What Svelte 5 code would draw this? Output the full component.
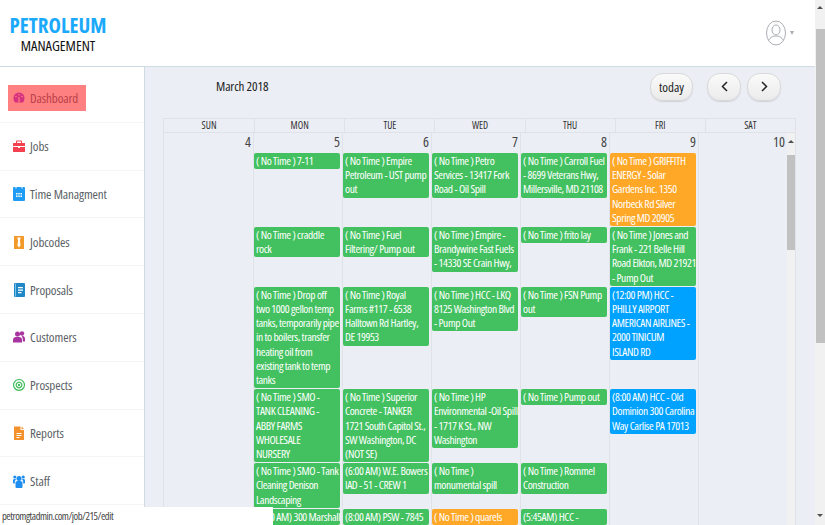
<script lang="ts">
  const nav = [
    { label: "Dashboard", icon: "gauge", color: "#d6317f", active: true },
    { label: "Jobs", icon: "case", color: "#f4404f" },
    { label: "Time Managment", icon: "cal", color: "#1e9cf3" },
    { label: "Jobcodes", icon: "tie", color: "#f39a2c" },
    { label: "Proposals", icon: "book", color: "#1e88c9" },
    { label: "Customers", icon: "users", color: "#a8359f" },
    { label: "Prospects", icon: "target", color: "#43bd5e" },
    { label: "Reports", icon: "doc", color: "#f3912c" },
    { label: "Staff", icon: "team", color: "#1e8ff0" },
  ];

  const days = ["SUN", "MON", "TUE", "WED", "THU", "FRI", "SAT"];
  const dates = [4, 5, 6, 7, 8, 9, 10];

  // one row per stacking level, columns Mon..Fri
  const rows = [
    [
      { t: "( No Time ) 7-11" },
      { t: "( No Time ) Empire\nPetroleum - UST pump\nout" },
      { t: "( No Time ) Petro\nServices - 13417 Fork\nRoad - Oil Spill" },
      { t: "( No Time ) Carroll Fuel\n- 8699 Veterans Hwy,\nMillersville, MD 21108" },
      { t: "( No Time ) GRIFFITH\nENERGY - Solar\nGardens Inc. 1350\nNorbeck Rd Silver\nSpring MD 20905", c: "orange" },
    ],
    [
      { t: "( No Time ) craddle\nrock" },
      { t: "( No Time ) Fuel\nFiltering/ Pump out" },
      { t: "( No Time ) Empire -\nBrandywine Fast Fuels\n- 14330 SE Crain Hwy," },
      { t: "( No Time ) frito lay" },
      { t: "( No Time ) Jones and\nFrank - 221 Belle Hill\nRoad Elkton, MD 21921\n- Pump Out" },
    ],
    [
      { t: "( No Time ) Drop off\ntwo 1000 gellon temp\ntanks, temporarily pipe\nin to boilers, transfer\nheating oil from\nexisting tank to temp\ntanks" },
      { t: "( No Time ) Royal\nFarms #117 - 6538\nHalltown Rd Hartley,\nDE 19953" },
      { t: "( No Time ) HCC - LKQ\n8125 Washington Blvd\n- Pump Out" },
      { t: "( No Time ) FSN Pump\nout" },
      { t: "(12:00 PM) HCC -\nPHILLY AIRPORT\nAMERICAN AIRLINES -\n2000 TINICUM\nISLAND RD", c: "blue" },
    ],
    [
      { t: "( No Time ) SMO -\nTANK CLEANING -\nABBY FARMS\nWHOLESALE\nNURSERY" },
      { t: "( No Time ) Superior\nConcrete - TANKER\n1721 South Capitol St.,\nSW Washington, DC\n(NOT SE)" },
      { t: "( No Time ) HP\nEnvironmental -Oil Spill\n- 1717 K St., NW\nWashington" },
      { t: "( No Time ) Pump out" },
      { t: "(8:00 AM) HCC - Old\nDominion 300 Carolina\nWay Carlise PA 17013", c: "blue" },
    ],
    [
      { t: "( No Time ) SMO - Tank\nCleaning Denison\nLandscaping" },
      { t: "(6:00 AM) W.E. Bowers\nIAD - 51 - CREW 1" },
      { t: "( No Time )\nmonumental spill" },
      { t: "( No Time ) Rommel\nConstruction" },
      null,
    ],
    [
      { t: "(8:00 AM) 300 Marshall" },
      { t: "(8:00 AM) PSW - 7845" },
      { t: "( No Time ) quarels", c: "orange" },
      { t: "(5:45AM) HCC -" },
      null,
    ],
  ];
</script>

<div class="page">
  <div class="content">
    <header>
      <div class="logo">
        <span class="logo-top">PETROLEUM</span>
        <span class="logo-sub">MANAGEMENT</span>
      </div>
      <div class="user">
        <svg width="22" height="26" viewBox="0 0 22 26" fill="none" stroke="#a9adb3" stroke-width="1">
          <ellipse cx="11" cy="13" rx="9.5" ry="12" />
          <ellipse cx="11" cy="10" rx="4" ry="5" />
          <path d="M3.500 20.500c2-3.500 4.500-4.500 7.500-4.500s5.500 1 7.500 4.500" />
        </svg>
        <span class="caret"></span>
      </div>
    </header>

    <div class="body">
      <aside>
        {#each nav as item}
          <div class="nav-row">
            <a class="nav-link" class:active={item.active} href="#/">
              <svg class="nav-icon" width="12" height="14" viewBox="0 0 12 14" fill={item.color}>
                {#if item.icon === "gauge"}
                  <path d="M6 1.500A5.500 5.500 0 0 0 .5 7c0 1.900.6 3.400 1.500 4.500h8c.9-1.100 1.500-2.600 1.500-4.500A5.500 5.500 0 0 0 6 1.500z" />
                  <circle cx="6" cy="3.700" r=".8" fill="#ff8080" />
                  <circle cx="3" cy="5.500" r=".8" fill="#ff8080" />
                  <circle cx="9" cy="5.500" r=".8" fill="#ff8080" />
                  <rect x="5.400" y="6" width="1.200" height="5" fill="#ff8080" />
                {:else if item.icon === "case"}
                  <path d="M4 1.500h4a1 1 0 0 1 1 1V4h2.500a.5.500 0 0 1 .5.500V7H0V4.500A.5.500 0 0 1 .5 4H3V2.500a1 1 0 0 1 1-1zM4 2.500V4h4V2.500H4z" />
                  <path d="M0 8h5v1h2V8h5v4.500a.5.500 0 0 1-.5.500H.5a.5.500 0 0 1-.5-.500z" />
                {:else if item.icon === "cal"}
                  <path d="M1 0h1.500v1.500h1V0h5v1.500h1V0H11a1 1 0 0 1 1 1v12a1 1 0 0 1-1 1H1a1 1 0 0 1-1-1V1a1 1 0 0 1 1-1z" />
                  <path fill="#fff" d="M3 6h1.500v1.500H3zM5.250 6h1.500v1.500h-1.500zM7.500 6H9v1.500H7.500zM3 8.500h1.500V10H3zM5.250 8.500h1.500V10h-1.500zM7.500 8.500H9V10H7.500z" />
                {:else if item.icon === "tie"}
                  <rect x="1" y="1" width="10" height="13" rx=".5" />
                  <path fill="#fff" d="M4.500 2.500h3v1.200L6.900 5 7.500 10.500 6 12.500 4.500 10.500 5.100 5 4.500 3.700z" />
                {:else if item.icon === "book"}
                  <rect x="1" y="0" width="11" height="14" rx="1" />
                  <path fill="#fff" d="M5 4h5v1.200H5zM5 6.500h5v1.200H5zM5 9h3.500v1.200H5z" />
                  <rect x="2" y="0.500" width="1" height="13" fill="#7fc0e8" />
                {:else if item.icon === "users"}
                  <circle cx="4.500" cy="4" r="2.500" />
                  <circle cx="9" cy="3.500" r="2.200" />
                  <path d="M0 12.500V10c0-2 1.500-3.200 4.500-3.200S9 8 9 10v2.500z" />
                  <path d="M9.800 6c1.500.2 2.200 1.300 2.200 3v2.500H9.800V9.500c0-1.200-.4-2.200-1.200-3z" />
                {:else if item.icon === "target"}
                  <path fill="none" stroke={item.color} stroke-width="1.200" d="M6 1.500a5.400 5.400 0 1 0 .001 0zM6 4.200a2.800 2.800 0 1 0 .001 0z" />
                  <circle cx="6" cy="7" r="1.200" />
                {:else if item.icon === "doc"}
                  <path d="M1 1a.5.500 0 0 1 .5-.500H7.500v3.500H11V13.500a.5.500 0 0 1-.5.500H1.500a.5.500 0 0 1-.5-.500z" />
                  <path d="M8.500 .5 11 3H8.500z" />
                  <path fill="#fff" d="M3.500 7h5v1h-5zM3.500 9h5v1h-5zM3.500 11h3v1h-3z" />
                {:else}
                  <circle cx="6" cy="4.500" r="2.500" />
                  <circle cx="1.800" cy="3" r="1.600" />
                  <circle cx="10.200" cy="3" r="1.600" />
                  <path d="M2.500 8.500c0-1 1-1.500 3.500-1.500s3.500.5 3.500 1.500V13a1 1 0 0 1-1 1h-5a1 1 0 0 1-1-1z" />
                  <path d="M0 6.500c0-1 .5-1.500 1.800-1.500.8 0 1.200.2 1.500.6-1 .6-1.500 1.400-1.500 2.400v1.500H.5L0 9z" />
                  <path d="M12 6.500c0-1-.5-1.500-1.800-1.500-.8 0-1.200.2-1.500.6 1 .6 1.500 1.400 1.500 2.400v1.500h1.300l.5-.5z" />
                {/if}
              </svg>
              <span>{item.label}</span>
            </a>
          </div>
        {/each}
      </aside>

      <main>
        <div class="toolbar">
          <h2>March 2018</h2>
          <div class="buttons">
            <button class="today">today</button>
            <button class="arrow" aria-label="Previous">
              <svg width="7" height="11" viewBox="0 0 7 11" fill="none" stroke="#222" stroke-width="1.500"><path d="M6 1 1.500 5.500 6 10" /></svg>
            </button>
            <button class="arrow" aria-label="Next">
              <svg width="7" height="11" viewBox="0 0 7 11" fill="none" stroke="#222" stroke-width="1.500"><path d="M1 1l4.500 4.500L1 10" /></svg>
            </button>
          </div>
        </div>

        <div class="calendar">
          <div class="head">
            {#each days as day}
              <div class="head-cell">{day}</div>
            {/each}
          </div>
          <div class="scroller">
            <div class="grid">
              {#each dates as d}
                <div class="date">{d}</div>
              {/each}
              {#each rows as row}
                <div class="cell"></div>
                {#each row as ev}
                  <div class="cell">
                    {#if ev}
                      <div class="event {ev.c ?? ''}">{ev.t}</div>
                    {/if}
                  </div>
                {/each}
                <div class="cell"></div>
              {/each}
            </div>
            <div class="inner-bar">
              <span class="up"></span>
              <span class="inner-thumb"></span>
            </div>
          </div>
        </div>
      </main>
    </div>
  </div>

  <div class="page-bar">
    <span class="page-thumb"></span>
    <span class="down"></span>
  </div>
  <span class="page-up up"></span>

  <div class="status">petromgtadmin.com/job/215/edit</div>
</div>

<style>
  :global(body) {
    margin: 0;
    overflow: hidden;
  }

  .page {
    display: flex;
    width: 825px;
    height: 525px;
    overflow: hidden;
    position: relative;
    font-family: "Open Sans", Lato, sans-serif;
    font-stretch: 75%;
    color: #555;
  }

  .content {
    width: 815px;
    flex-shrink: 0;
  }

  /* Header */
  header {
    display: flex;
    align-items: center;
    justify-content: space-between;
    height: 66px;
    background: #fff;
    border-bottom: 1px solid #cfdbe2;
    padding: 0 21px 0 10px;
  }

  .logo {
    display: flex;
    flex-direction: column;
    align-items: center;
    width: 96px;
    margin-top: 1px;
  }

  .logo-top {
    font-size: 21px;
    font-weight: 700;
    color: #1aa9fb;
    line-height: 24px;
  }

  .logo-sub {
    font-size: 14.500px;
    color: #111;
    line-height: 18px;
  }

  .user {
    display: flex;
    align-items: center;
    gap: 3px;
  }

  .caret {
    border: 2.500px solid transparent;
    border-top: 4px solid #a9adb3;
    border-bottom: 0;
  }

  .body {
    display: flex;
    height: 458px;
  }

  /* Sidebar */
  aside {
    width: 144px;
    flex-shrink: 0;
    background: #fff;
    border-right: 1px solid #cfdbe2;
    padding-top: 8px;
  }

  .nav-row {
    height: 46.800px;
    border-bottom: 1px solid #f3f5f7;
    display: flex;
    align-items: center;
    padding-left: 8px;
  }

  .nav-link {
    display: flex;
    align-items: center;
    gap: 5px;
    height: 26px;
    padding: 0 0 0 5px;
    color: #5b5f66;
    font-size: 13px;
    font-stretch: 80%;
    letter-spacing: -.1px;
    text-decoration: none;
  }

  .nav-link.active {
    width: 73px;
    background: #ff8080;
    color: #b8404a;
  }

  .nav-icon {
    flex-shrink: 0;
  }

  /* Calendar */
  main {
    flex: 1;
    background: #ebeef4;
    padding: 5px 18px 0 18px;
    overflow: hidden;
  }

  .toolbar {
    display: flex;
    align-items: center;
    justify-content: space-between;
    height: 29px;
    padding: 0 16px 0 53px;
    margin-bottom: 17px;
  }

  h2 {
    margin: 0 0 2px;
    font-size: 13px;
    font-weight: 400;
    letter-spacing: -.1px;
    color: #222;
  }

  .buttons {
    display: flex;
    gap: 6px;
  }

  button {
    height: 28px;
    border: 1px solid #d9d9d9;
    border-radius: 13px;
    background: linear-gradient(#fafafa, #ebebeb);
    box-shadow: 0 1px 1px rgba(0, 0, 0, .12);
    color: #222;
    font: 13px "Open Sans", Lato, sans-serif;
    font-stretch: 75%;
    padding: 0;
    display: flex;
    align-items: center;
    justify-content: center;
  }

  .today {
    width: 43px;
    margin-right: 8px;
  }

  .arrow {
    width: 34px;
  }

  .calendar {
    border: 1px solid #dfe2e6;
    border-bottom: 0;
    width: 631px;
  }

  .head {
    display: grid;
    grid-template-columns: repeat(7, 1fr);
    height: 13px;
    border-bottom: 1px solid #dfe2e6;
  }

  .head-cell {
    font-size: 10px;
    font-weight: 500;
    line-height: 13px;
    text-align: center;
    color: #333;
    border-left: 1px solid #dfe2e6;
  }

  .head-cell:first-child {
    border-left: 0;
  }

  .scroller {
    display: flex;
    height: 400px;
    overflow: hidden;
  }

  .grid {
    display: grid;
    grid-template-columns: repeat(7, 89px);
    grid-auto-rows: min-content;
    width: 623px;
    flex-shrink: 0;
  }

  .date {
    height: 20px;
    font-size: 14px;
    line-height: 18px;
    text-align: right;
    padding-right: 2px;
    color: #444;
    border-left: 1px solid #dfe2e6;
    box-sizing: border-box;
  }

  .cell {
    border-left: 1px solid #dfe2e6;
    padding: 0 2px 1px 0;
    min-width: 0;
  }

  .date:first-child,
  .cell:nth-child(7n + 1) {
    border-left: 0;
  }

  .event {
    background: #43c160;
    color: #fff;
    border-radius: 2px;
    font-size: 11.500px;
    letter-spacing: -.4px;
    line-height: 14.200px;
    padding: 1px 0 1px 2px;
    white-space: pre;
    overflow: hidden;
  }

  .event.orange {
    background: #ffa726;
  }

  .event.blue {
    background: #00a2ff;
  }

  /* Scrollbars */
  .inner-bar {
    flex: 1;
    background: #f1f1f1;
    display: flex;
    flex-direction: column;
    align-items: center;
    padding-top: 7px;
    gap: 12px;
  }

  .inner-thumb {
    width: 8px;
    height: 95px;
    background: #c1c1c1;
  }

  .page-bar {
    flex: 1;
    background: #f1f1f1;
    display: flex;
    flex-direction: column;
    align-items: center;
    padding-top: 29px;
  }

  .page-thumb {
    width: 9px;
    height: 314px;
    background: #c1c1c1;
  }

  .up {
    border: 3px solid transparent;
    border-bottom: 3px solid #505050;
    border-top: 0;
  }

  .page-up {
    position: absolute;
    top: 6px;
    right: 2px;
  }

  .down {
    margin-top: 171px;
    border: 3px solid transparent;
    border-top: 3px solid #505050;
    border-bottom: 0;
  }

  .status {
    position: absolute;
    left: 0;
    bottom: 0;
    width: 273px;
    height: 18px;
    background: #fff;
    font-size: 10.500px;
    letter-spacing: -.45px;
    line-height: 19px;
    padding-left: 2px;
    box-sizing: border-box;
    color: #444;
  }
</style>
